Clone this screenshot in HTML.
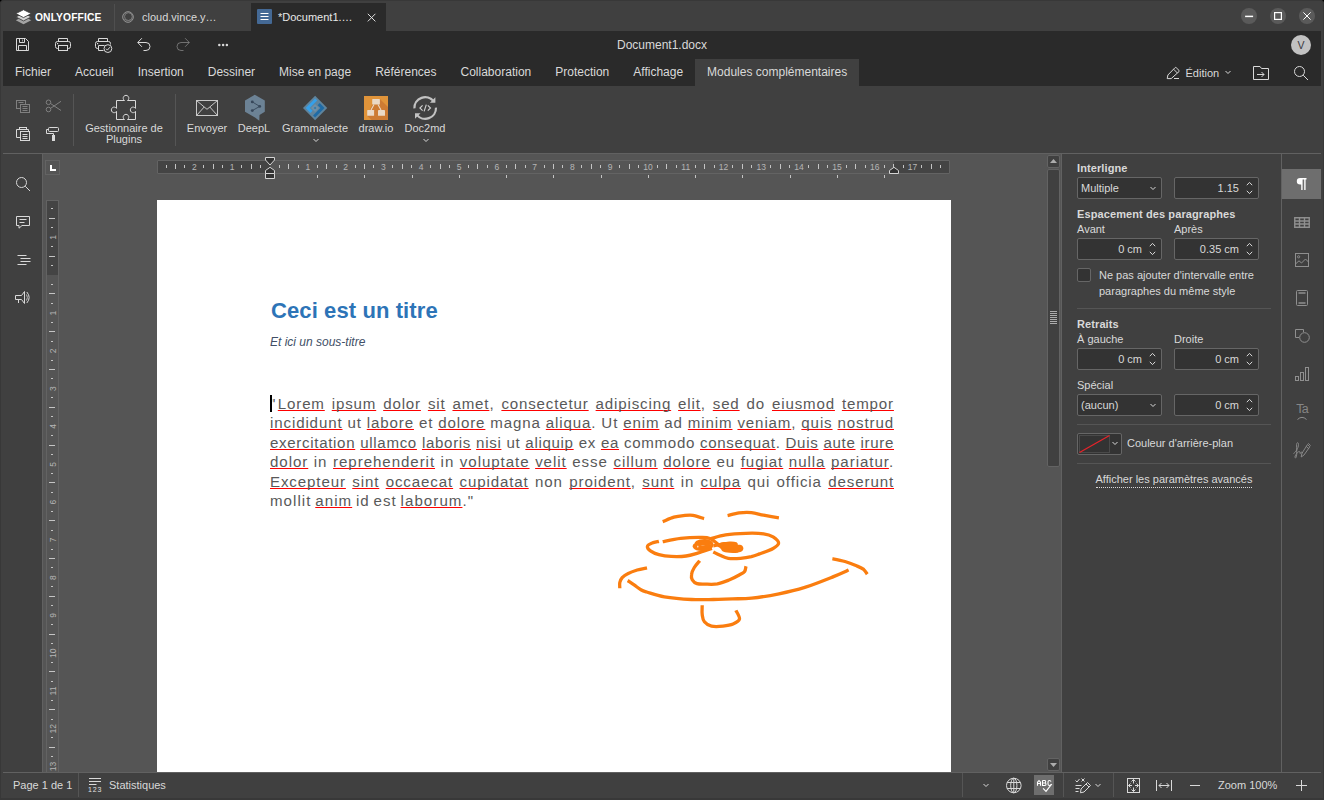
<!DOCTYPE html>
<html lang="fr">
<head>
<meta charset="utf-8">
<title>Document1.docx - ONLYOFFICE</title>
<style>
*{box-sizing:border-box;margin:0;padding:0}
html,body{width:1324px;height:800px;overflow:hidden;background:#000}
body{font-family:"Liberation Sans",sans-serif;font-size:11px;color:#d9d9d9;position:relative}
.abs{position:absolute}
#win{position:absolute;left:0;top:0;width:1324px;height:800px;background:#404040;border-radius:4px 4px 0 0;overflow:hidden}
#frame{position:absolute;left:0;top:0;width:1324px;height:800px;border:1px solid #383838;border-bottom-width:2px;border-radius:4px 4px 0 0;pointer-events:none;z-index:50}
svg{display:block;overflow:visible}
.ic{position:absolute}
.s{fill:none;stroke:#d9d9d9;stroke-width:1}
.f{fill:#d9d9d9;stroke:none}

/* title bar */
#tabsep1{left:114px;top:4px;width:1px;height:27px;background:#4f4f4f}
#tab3{left:251px;top:3px;width:135px;height:29px;background:#2a2a2a}
.ttxt{position:absolute;font-size:11px;color:#d9d9d9;white-space:nowrap;line-height:14px}
.wbtn{position:absolute;top:8px;width:16px;height:16px;border-radius:8px;background:#5a5a5a}

/* header */
#hdr{left:3px;top:31px;width:1318px;height:55px;background:#2a2a2a}
.mtab{position:absolute;top:59px;height:27px;font-size:12px;line-height:14px;padding-top:6px;color:#d9d9d9;white-space:nowrap}
#mact{left:695px;top:59px;width:164px;height:27px;background:#404040}

/* ribbon */
#ribbon{left:3px;top:86px;width:1318px;height:68px;background:#404040;border-bottom:1px solid #616161}
.vsep{position:absolute;width:1px;background:#555}
.cap{position:absolute;font-size:11px;line-height:11px;color:#d9d9d9;text-align:center;white-space:nowrap;transform:translateX(-50%)}

/* editor */
#editor{left:3px;top:154px;width:1318px;height:618px;background:#555}
#lside{left:3px;top:154px;width:40px;height:618px;background:#404040;border-right:1px solid #616161}
#page{left:157px;top:200px;width:794px;height:572px;background:#fff}
#rpanel{left:1061px;top:154px;width:221px;height:618px;background:#404040;border-left:1px solid #616161;border-right:1px solid #616161}
#rside{left:1282px;top:154px;width:39px;height:618px;background:#404040}
#ract{left:1282px;top:169px;width:39px;height:30px;background:#6e6e6e}

/* status */
#status{left:3px;top:772px;width:1318px;height:26px;background:#404040;border-top:1px solid #616161}
.stxt{position:absolute;font-size:11px;line-height:14px;color:#d9d9d9;white-space:nowrap}

/* right panel widgets */
.lbl{position:absolute;font-size:11px;line-height:14px;color:#d9d9d9;white-space:nowrap}
.lbl.b{font-weight:bold;letter-spacing:0.1px}
.box{position:absolute;width:85px;height:22px;background:#333;border:1px solid #666;border-radius:2px;font-size:11px;line-height:20px;color:#d9d9d9;white-space:nowrap}
.box .v{position:absolute;right:19px;top:0}
.box .l{position:absolute;left:3px;top:0}
.hr{position:absolute;left:1077px;width:194px;height:1px;background:#555}

/* document */
.bl{font-size:15.1px;line-height:20px;letter-spacing:0.62px;color:#595959}
.bl u{text-decoration:underline;text-decoration-color:#f00;text-decoration-thickness:1px;text-underline-offset:1px;text-decoration-skip-ink:none}
.doc{position:absolute;white-space:nowrap}
</style>
</head>
<body>
<div id="win">

<!-- ===== TITLE BAR ===== -->
<div class="abs" id="tabsep1"></div>
<div class="abs" id="tab3"></div>
<div id="titlebar-content">
<!-- logo -->
<svg class="ic" style="left:0;top:0" width="40" height="32" viewBox="0 0 40 32">
<path d="M23.5 16.4L31.3 20.2L23.5 24.2L15.8 20.2Z" fill="#a4a4a4"/>
<path d="M23.5 13.1L31.3 16.9L23.5 20.9L15.8 16.9Z" fill="#d2d2d2" stroke="#404040" stroke-width="0.9"/>
<path d="M23.5 9.7L31.3 13.6L23.5 17.6L15.8 13.6Z" fill="#ffffff" stroke="#404040" stroke-width="0.9"/>
</svg>
<div class="ttxt" style="left:35px;top:11px;font-weight:bold;font-size:10.3px;letter-spacing:0.1px;color:#fff">ONLYOFFICE</div>
<!-- tab 2 -->
<svg class="ic" style="left:122px;top:11px" width="12" height="12" viewBox="0 0 12 12">
<circle cx="6" cy="6" r="5.3" fill="none" stroke="#a0a0a0" stroke-width="0.9"/>
<circle cx="6.4" cy="5.6" r="3.9" fill="none" stroke="#8a8a8a" stroke-width="0.8"/>
<path d="M1.6 8.2Q5 11 9.8 8.8" fill="none" stroke="#7a7a7a" stroke-width="0.7"/>
</svg>
<div class="ttxt" style="left:142px;top:10px">cloud.vince.y…</div>
<!-- tab 3 -->
<svg class="ic" style="left:257px;top:9px" width="15" height="15" viewBox="0 0 15 15">
<rect x="0" y="0" width="15" height="15" rx="1" fill="#446995"/>
<path d="M3.5 4.5h8M3.5 7.5h8M3.5 10.5h8" stroke="#fff" stroke-width="1" fill="none"/>
</svg>
<div class="ttxt" style="left:278px;top:10px;color:#e8e8e8">*Document1.…</div>
<svg class="ic" style="left:367px;top:13px" width="9" height="9" viewBox="0 0 9 9"><path d="M0.8 0.8L8.4 8.4M8.4 0.8L0.8 8.4" stroke="#e0e0e0" stroke-width="1" fill="none"/></svg>
<!-- window buttons -->
<div class="wbtn" style="left:1241px"></div>
<div class="wbtn" style="left:1270px"></div>
<div class="wbtn" style="left:1299px"></div>
<svg class="ic" style="left:1241px;top:8px" width="16" height="16" viewBox="0 0 16 16"><path d="M4.1 8.4h8" stroke="#fff" stroke-width="1.5" fill="none"/></svg>
<svg class="ic" style="left:1270px;top:8px" width="16" height="16" viewBox="0 0 16 16"><rect x="4.6" y="4.6" width="6.8" height="6.8" stroke="#fff" stroke-width="1.2" fill="none"/></svg>
<svg class="ic" style="left:1299px;top:8px" width="16" height="16" viewBox="0 0 16 16"><path d="M4.4 4.4L11.6 11.6M11.6 4.4L4.4 11.6" stroke="#fff" stroke-width="1" fill="none"/></svg>
</div>

<!-- ===== HEADER ===== -->
<div class="abs" id="hdr"></div>
<div class="abs" id="mact"></div>
<div id="header-content">
<!-- save -->
<svg class="ic" style="left:15px;top:38px" width="15" height="14" viewBox="0 0 15 14">
<path class="s" d="M1.5 0.5H10.5L13.5 3.5V12.5H1.5Z"/><path class="s" d="M4.5 0.5V4.5H9.5V0.5"/><path d="M7.5 1.5V3.5" stroke="#9a9a9a"/><path class="s" d="M3.5 12.5V7.5H11.5V12.5"/>
</svg>
<!-- print -->
<svg class="ic" style="left:55px;top:38px" width="16" height="13" viewBox="0 0 16 13">
<path class="s" d="M3.5 3.5V0.5H12.5V3.5"/><path class="s" d="M3.5 10.5H2.5Q0.5 10.5 0.5 8.5V5.5Q0.5 3.5 2.5 3.5H13.5Q15.5 3.5 15.5 5.5V8.5Q15.5 10.5 13.5 10.5H12.5"/><rect class="s" x="3.5" y="7.5" width="9" height="5"/><rect x="2" y="5" width="1.2" height="1.2" fill="#d9d9d9"/>
</svg>
<!-- print preview -->
<svg class="ic" style="left:95px;top:38px" width="18" height="16" viewBox="0 0 18 16">
<path class="s" d="M3.5 3.5V0.5H12.5V3.5"/><path class="s" d="M3.5 10.5H2.5Q0.5 10.5 0.5 8.5V5.5Q0.5 3.5 2.5 3.5H13.5Q15.5 3.5 15.5 5.5V6.5"/><path class="s" d="M8.5 12.5H3.5V7.5H9.5"/><rect x="2" y="5" width="1.2" height="1.2" fill="#d9d9d9"/>
<circle class="s" cx="12.9" cy="10.6" r="3.9"/><path class="s" d="M11 10.7L12.4 12.1L14.9 9.2"/>
</svg>
<!-- undo -->
<svg class="ic" style="left:136px;top:37px" width="16" height="15" viewBox="0 0 16 15">
<path class="s" d="M5.9 1.2L1.7 5.5L5.9 9.8M2 5.5H10A4 4 0 0 1 10 13.5H7.5"/>
</svg>
<!-- redo (disabled) -->
<svg class="ic" style="left:175.5px;top:37px;opacity:.4" width="16" height="15" viewBox="0 0 16 15">
<path class="s" d="M9.1 1.2L13.3 5.5L9.1 9.8M13 5.5H5A4 4 0 0 0 5 13.5H7.5"/>
</svg>
<!-- more -->
<svg class="ic" style="left:217px;top:43px" width="12" height="4" viewBox="0 0 12 4"><circle class="f" cx="2.3" cy="2" r="1.25"/><circle class="f" cx="6.1" cy="2" r="1.25"/><circle class="f" cx="9.9" cy="2" r="1.25"/></svg>
<div class="abs" style="left:462px;top:38px;width:400px;text-align:center;font-size:12px;line-height:14px;color:#d9d9d9">Document1.docx</div>
<div class="abs" style="left:1291px;top:35px;width:20px;height:20px;border-radius:10px;background:#c2c2c2;color:#383840;font-size:10.5px;line-height:20px;text-align:center">V</div>
<!-- menu tabs -->
<div class="abs" style="left:3px;top:59px;height:27px;display:flex;font-size:12px;line-height:14px;color:#d9d9d9;white-space:nowrap">
<span style="padding:6px 12px 0">Fichier</span><span style="padding:6px 12px 0">Accueil</span><span style="padding:6px 12px 0">Insertion</span><span style="padding:6px 12px 0">Dessiner</span><span style="padding:6px 12px 0">Mise en page</span><span style="padding:6px 12px 0">Références</span><span style="padding:6px 12px 0">Collaboration</span><span style="padding:6px 12px 0">Protection</span><span style="padding:6px 12px 0">Affichage</span><span style="padding:6px 12px 0">Modules complémentaires</span>
</div>
<!-- edition -->
<svg class="ic" style="left:1165px;top:65px" width="16" height="16" viewBox="0 0 16 16">
<path class="s" d="M2.2 13.6L2.9 10L10 2.7Q10.6 2.1 11.2 2.7L14 5.4Q14.6 6 14 6.6L6.2 13.6Z" stroke-linejoin="round"/><path class="s" d="M8.6 4.2L12.4 8"/><path class="s" d="M9 13.5H14"/>
</svg>
<div class="abs" style="left:1185.5px;top:66px;font-size:11px;line-height:14px;color:#d9d9d9">Édition</div>
<svg class="ic" style="left:1224px;top:70px" width="8" height="5" viewBox="0 0 8 5"><path class="s" d="M1.5 1L4 3.5L6.5 1" stroke-width="1.3"/></svg>
<!-- open location -->
<svg class="ic" style="left:1253px;top:66px" width="16" height="14" viewBox="0 0 16 14">
<path class="s" d="M0.5 13.5V0.5H7L8.5 2.5H15.5V13.5Z"/><path class="s" d="M4 8.5H11"/><path class="s" d="M8.5 6L11 8.5L8.5 11"/>
</svg>
<!-- search -->
<svg class="ic" style="left:1293px;top:65px" width="16" height="16" viewBox="0 0 16 16"><circle class="s" cx="6.5" cy="6.5" r="5"/><path class="s" d="M10.2 10.2L15 15"/></svg>
</div>

<!-- ===== RIBBON ===== -->
<div class="abs" id="ribbon"></div>
<div id="ribbon-content">
<!-- copy (disabled) -->
<svg class="ic" style="left:15px;top:99px;opacity:.42" width="16" height="15" viewBox="0 0 16 15">
<rect class="s" x="1.5" y="1.5" width="9" height="8"/><path class="s" d="M3.5 3.5H8.5"/>
<rect x="5.5" y="5.5" width="9" height="8" fill="#404040" stroke="#d9d9d9"/><path class="s" d="M7.5 7.5H12.5M7.5 9.5H12.5M7.5 11.5H12.5"/>
</svg>
<!-- cut (disabled) -->
<svg class="ic" style="left:45px;top:99px;opacity:.42" width="17" height="14" viewBox="0 0 17 14">
<circle class="s" cx="3.5" cy="3.3" r="2.3"/><circle class="s" cx="3.5" cy="10.5" r="2.3"/><path class="s" d="M5.5 4.5L16 11.5M5.5 9.4L16 2.3"/>
</svg>
<!-- paste -->
<svg class="ic" style="left:15px;top:125px" width="16" height="17" viewBox="0 0 16 17">
<path class="s" d="M4.5 4.5H1.5V12.5H5.5"/><path class="s" d="M11.5 4.5H13.5V6.5"/><rect class="s" x="4.5" y="2.5" width="7" height="2"/>
<rect class="s" x="5.5" y="6.5" width="9" height="9"/><path class="s" d="M7.5 9.5H12.5M7.5 11.5H12.5M7.5 13.5H12.5"/>
</svg>
<!-- format painter -->
<svg class="ic" style="left:46px;top:126px" width="14" height="16" viewBox="0 0 14 16">
<rect class="s" x="2.5" y="1.5" width="10" height="4" rx="1"/><path class="s" d="M2.5 3.5H0.5V7.5H7.5V9.5"/><rect x="6.5" y="9.5" width="2" height="5" fill="#d9d9d9" stroke="#d9d9d9"/>
</svg>
<div class="vsep" style="left:73px;top:94px;height:52px"></div>
<!-- plugin manager: puzzle -->
<svg class="ic" style="left:106px;top:93px" width="32" height="28" viewBox="0 0 32 28">
<path class="s" d="M10.5 7.5H18.5A2.8 2.8 0 1 1 21.5 7.5H29.5V15.4A2.8 2.8 0 1 0 29.5 18.4V26.5H21.5A2.8 2.8 0 1 0 18.5 26.5H10.5V18.4A2.8 2.8 0 1 1 10.5 15.4Z" stroke-width="1.15"/>
</svg>
<div class="cap" style="left:124px;top:123px">Gestionnaire de</div>
<div class="cap" style="left:124px;top:134px">Plugins</div>
<div class="vsep" style="left:175px;top:94px;height:52px"></div>
<!-- envoyer -->
<svg class="ic" style="left:196px;top:100px" width="22" height="16" viewBox="0 0 22 16">
<g style="stroke:#c9c9c9"><rect class="s" style="stroke:#c9c9c9" x="0.5" y="0.5" width="21" height="15"/><path class="s" style="stroke:#c9c9c9" d="M0.5 0.5L11 9.3L21.5 0.5"/><path class="s" style="stroke:#c9c9c9" d="M0.5 15.5L8.2 7M21.5 15.5L13.8 7"/></g>
</svg>
<div class="cap" style="left:207px;top:123px">Envoyer</div>
<!-- DeepL -->
<svg class="ic" style="left:244px;top:94px" width="22" height="28" viewBox="0 0 22 28">
<path d="M10.8 0.8L20.8 6.6V17.8L15.5 20.9L15.3 26.8L11 23.5L1 17.8V6.6Z" fill="#6c8295"/>
<path d="M8.3 7.9L15.7 12.4L8.3 16.6" stroke="#37475a" stroke-width="0.9" fill="none"/>
<circle cx="8.3" cy="7.9" r="1.45" fill="#37475a"/><circle cx="15.7" cy="12.4" r="1.45" fill="#37475a"/><circle cx="8.3" cy="16.6" r="1.45" fill="#37475a"/>
</svg>
<div class="cap" style="left:254px;top:123px">DeepL</div>
<!-- Grammalecte -->
<svg class="ic" style="left:302px;top:95px" width="26" height="26" viewBox="0 0 26 26">
<g transform="translate(13.1 13) rotate(45)">
<rect x="-8.6" y="-8.6" width="17.2" height="17.2" fill="#5f849d"/>
<path d="M-6.7 -6.7H-3.8V3.8H0.2V6.7H-6.7Z" fill="#35a0ea"/>
<path d="M6.7 6.7H3.8V-3.8H-0.2V-6.7H6.7Z" fill="#1e6ba6"/>
<rect x="-2.9" y="-2.9" width="5.8" height="5.8" fill="#6f8fa6"/>
<rect x="-0.9" y="-0.9" width="1.8" height="1.8" fill="#2a78ad"/>
</g>
</svg>
<div class="cap" style="left:315px;top:123px">Grammalecte</div>
<svg class="ic" style="left:312px;top:138px" width="8" height="5" viewBox="0 0 8 5"><path class="s" d="M1.5 1L4 3.5L6.5 1" stroke-width="1.3"/></svg>
<!-- draw.io -->
<svg class="ic" style="left:364px;top:96px" width="24" height="24" viewBox="0 0 24 24">
<rect width="24" height="24" fill="#e0943a"/>
<path d="M15.9 3L24 11V24H7.5L3.2 19.8L8.2 8.5Z" fill="#cd7b33"/>
<path d="M10 8.5L7 14.1M14 8.5L17 14.1" stroke="#ead9c6" stroke-width="1.1" fill="none"/>
<rect x="8.2" y="3" width="7.7" height="5.6" rx="0.4" fill="#ead9c6"/><rect x="3.2" y="14.1" width="6.9" height="5.7" rx="0.4" fill="#ead9c6"/><rect x="14" y="14.1" width="7" height="5.7" rx="0.4" fill="#ead9c6"/>
</svg>
<div class="cap" style="left:376px;top:123px">draw.io</div>
<!-- Doc2md -->
<svg class="ic" style="left:412px;top:95px" width="26" height="26" viewBox="0 0 26 26">
<path d="M2.41 13.38A10.8 10.8 0 0 1 21.71 6.35" fill="none" stroke="#c2c2c2" stroke-width="2.2"/>
<path d="M23.99 12.62A10.8 10.8 0 0 1 4.69 19.65" fill="none" stroke="#c2c2c2" stroke-width="2.2"/>
<path d="M23.4 2.2V7.7H17.9Z" fill="#c2c2c2"/><path d="M3 23.8V18.3H8.5Z" fill="#c2c2c2"/>
<path d="M10.6 10.4L7.9 13L10.6 15.6M15.8 10.4L18.5 13L15.8 15.6M14.3 9.6L12.1 16.4" fill="none" stroke="#cfcfcf" stroke-width="1.15"/>
</svg>
<div class="cap" style="left:425px;top:123px">Doc2md</div>
<svg class="ic" style="left:422px;top:138px" width="8" height="5" viewBox="0 0 8 5"><path class="s" d="M1.5 1L4 3.5L6.5 1" stroke-width="1.3"/></svg>

</div>

<!-- ===== EDITOR ===== -->
<div class="abs" id="editor"></div>
<div class="abs" id="lside"></div>
<div id="lside-content">
<svg class="ic" style="left:15px;top:176px" width="16" height="16" viewBox="0 0 16 16"><circle class="s" cx="6.5" cy="6.5" r="5"/><path class="s" d="M10.2 10.2L15 15"/></svg>
<svg class="ic" style="left:16px;top:216px" width="14" height="13" viewBox="0 0 14 13"><path class="s" d="M0.5 0.5H13.5V9.5H6L3 12.2V9.5H0.5Z"/><path class="s" d="M3.5 3.5H10.5M3.5 6.5H8.5"/></svg>
<svg class="ic" style="left:17px;top:254px" width="14" height="12" viewBox="0 0 14 12"><path class="s" d="M0.5 1.5H9.5M3.5 4.5H13.5M3.5 7.5H13.5M0.5 10.5H9.5"/></svg>
<svg class="ic" style="left:14px;top:290px" width="18" height="15" viewBox="0 0 18 15">
<path class="s" d="M1.5 5.5H7.5L10.5 1.5V13.5L7.5 9.5H1.5Z"/><path class="s" d="M4.5 9.5V13"/>
<path d="M12.5 4.5Q14.3 7.5 12.5 10.5" fill="none" stroke="#bdbdbd"/><path class="s" d="M12.8 2Q17.5 7.5 12.8 13"/>
</svg>
</div>
<div id="rulers"><div class="abs" style="left:45px;top:160px;width:15px;height:15px;border:1px solid #636363;background:#555"></div><svg class="ic" style="left:45px;top:160px" width="15" height="15" viewBox="0 0 15 15"><path d="M6 5V10H11" stroke="#fff" stroke-width="2" fill="none"/></svg><div class="abs" style="left:157px;top:160px;width:793px;height:14px;background:#555;border:1px solid #636363;border-radius:1px"></div><div class="abs" style="left:158px;top:161px;width:112px;height:12px;background:#444"></div><div class="abs" style="left:894px;top:161px;width:55px;height:12px;background:#444"></div><svg class="ic" style="left:0;top:154px" width="1060" height="30" viewBox="0 0 1060 30"><path d="M166.5 11V14" stroke="#c4c4c4"/><path d="M175.5 10V15" stroke="#c4c4c4"/><path d="M184.5 11V14" stroke="#c4c4c4"/><text x="194.4" y="16" font-size="8.5" fill="#b6b6b6" text-anchor="middle" font-family="Liberation Sans, sans-serif">2</text><path d="M203.5 11V14" stroke="#c4c4c4"/><path d="M213.5 10V15" stroke="#c4c4c4"/><path d="M222.5 11V14" stroke="#c4c4c4"/><text x="232.2" y="16" font-size="8.5" fill="#b6b6b6" text-anchor="middle" font-family="Liberation Sans, sans-serif">1</text><path d="M241.5 11V14" stroke="#c4c4c4"/><path d="M251.5 10V15" stroke="#c4c4c4"/><path d="M260.5 11V14" stroke="#c4c4c4"/><path d="M279.5 11V14" stroke="#c4c4c4"/><path d="M288.5 10V15" stroke="#c4c4c4"/><path d="M298.5 11V14" stroke="#c4c4c4"/><text x="307.8" y="16" font-size="8.5" fill="#b6b6b6" text-anchor="middle" font-family="Liberation Sans, sans-serif">1</text><path d="M317.5 11V14" stroke="#c4c4c4"/><path d="M326.5 10V15" stroke="#c4c4c4"/><path d="M336.5 11V14" stroke="#c4c4c4"/><text x="345.6" y="16" font-size="8.5" fill="#b6b6b6" text-anchor="middle" font-family="Liberation Sans, sans-serif">2</text><path d="M355.5 11V14" stroke="#c4c4c4"/><path d="M364.5 10V15" stroke="#c4c4c4"/><path d="M373.5 11V14" stroke="#c4c4c4"/><text x="383.4" y="16" font-size="8.5" fill="#b6b6b6" text-anchor="middle" font-family="Liberation Sans, sans-serif">3</text><path d="M392.5 11V14" stroke="#c4c4c4"/><path d="M402.5 10V15" stroke="#c4c4c4"/><path d="M411.5 11V14" stroke="#c4c4c4"/><text x="421.2" y="16" font-size="8.5" fill="#b6b6b6" text-anchor="middle" font-family="Liberation Sans, sans-serif">4</text><path d="M430.5 11V14" stroke="#c4c4c4"/><path d="M440.5 10V15" stroke="#c4c4c4"/><path d="M449.5 11V14" stroke="#c4c4c4"/><text x="459.0" y="16" font-size="8.5" fill="#b6b6b6" text-anchor="middle" font-family="Liberation Sans, sans-serif">5</text><path d="M468.5 11V14" stroke="#c4c4c4"/><path d="M477.5 10V15" stroke="#c4c4c4"/><path d="M487.5 11V14" stroke="#c4c4c4"/><text x="496.8" y="16" font-size="8.5" fill="#b6b6b6" text-anchor="middle" font-family="Liberation Sans, sans-serif">6</text><path d="M506.5 11V14" stroke="#c4c4c4"/><path d="M515.5 10V15" stroke="#c4c4c4"/><path d="M525.5 11V14" stroke="#c4c4c4"/><text x="534.6" y="16" font-size="8.5" fill="#b6b6b6" text-anchor="middle" font-family="Liberation Sans, sans-serif">7</text><path d="M544.5 11V14" stroke="#c4c4c4"/><path d="M553.5 10V15" stroke="#c4c4c4"/><path d="M562.5 11V14" stroke="#c4c4c4"/><text x="572.4" y="16" font-size="8.5" fill="#b6b6b6" text-anchor="middle" font-family="Liberation Sans, sans-serif">8</text><path d="M581.5 11V14" stroke="#c4c4c4"/><path d="M591.5 10V15" stroke="#c4c4c4"/><path d="M600.5 11V14" stroke="#c4c4c4"/><text x="610.2" y="16" font-size="8.5" fill="#b6b6b6" text-anchor="middle" font-family="Liberation Sans, sans-serif">9</text><path d="M619.5 11V14" stroke="#c4c4c4"/><path d="M629.5 10V15" stroke="#c4c4c4"/><path d="M638.5 11V14" stroke="#c4c4c4"/><text x="648.0" y="16" font-size="8.5" fill="#b6b6b6" text-anchor="middle" font-family="Liberation Sans, sans-serif">10</text><path d="M657.5 11V14" stroke="#c4c4c4"/><path d="M666.5 10V15" stroke="#c4c4c4"/><path d="M676.5 11V14" stroke="#c4c4c4"/><text x="685.7" y="16" font-size="8.5" fill="#b6b6b6" text-anchor="middle" font-family="Liberation Sans, sans-serif">11</text><path d="M695.5 11V14" stroke="#c4c4c4"/><path d="M704.5 10V15" stroke="#c4c4c4"/><path d="M714.5 11V14" stroke="#c4c4c4"/><text x="723.5" y="16" font-size="8.5" fill="#b6b6b6" text-anchor="middle" font-family="Liberation Sans, sans-serif">12</text><path d="M732.5 11V14" stroke="#c4c4c4"/><path d="M742.5 10V15" stroke="#c4c4c4"/><path d="M751.5 11V14" stroke="#c4c4c4"/><text x="761.3" y="16" font-size="8.5" fill="#b6b6b6" text-anchor="middle" font-family="Liberation Sans, sans-serif">13</text><path d="M770.5 11V14" stroke="#c4c4c4"/><path d="M780.5 10V15" stroke="#c4c4c4"/><path d="M789.5 11V14" stroke="#c4c4c4"/><text x="799.1" y="16" font-size="8.5" fill="#b6b6b6" text-anchor="middle" font-family="Liberation Sans, sans-serif">14</text><path d="M808.5 11V14" stroke="#c4c4c4"/><path d="M818.5 10V15" stroke="#c4c4c4"/><path d="M827.5 11V14" stroke="#c4c4c4"/><text x="836.9" y="16" font-size="8.5" fill="#b6b6b6" text-anchor="middle" font-family="Liberation Sans, sans-serif">15</text><path d="M846.5 11V14" stroke="#c4c4c4"/><path d="M855.5 10V15" stroke="#c4c4c4"/><path d="M865.5 11V14" stroke="#c4c4c4"/><text x="874.7" y="16" font-size="8.5" fill="#b6b6b6" text-anchor="middle" font-family="Liberation Sans, sans-serif">16</text><path d="M884.5 11V14" stroke="#c4c4c4"/><path d="M893.5 10V15" stroke="#c4c4c4"/><path d="M903.5 11V14" stroke="#c4c4c4"/><text x="912.5" y="16" font-size="8.5" fill="#b6b6b6" text-anchor="middle" font-family="Liberation Sans, sans-serif">17</text><path d="M921.5 11V14" stroke="#c4c4c4"/><path d="M931.5 10V15" stroke="#c4c4c4"/><path d="M940.5 11V14" stroke="#c4c4c4"/><path d="M317.5 21V24" stroke="#c4c4c4"/><path d="M364.5 21V24" stroke="#c4c4c4"/><path d="M412.5 21V24" stroke="#c4c4c4"/><path d="M459.5 21V24" stroke="#c4c4c4"/><path d="M506.5 21V24" stroke="#c4c4c4"/><path d="M553.5 21V24" stroke="#c4c4c4"/><path d="M601.5 21V24" stroke="#c4c4c4"/><path d="M648.5 21V24" stroke="#c4c4c4"/><path d="M695.5 21V24" stroke="#c4c4c4"/><path d="M742.5 21V24" stroke="#c4c4c4"/><path d="M790.5 21V24" stroke="#c4c4c4"/><path d="M837.5 21V24" stroke="#c4c4c4"/><path d="M884.5 21V24" stroke="#c4c4c4"/><path d="M265.5 3.5H274.5V6L270 11L265.5 6Z" fill="#333" stroke="#d4d4d4" stroke-width="1" stroke-linejoin="round"/><path d="M265.5 19.5V16.5L270 13.3L274.5 16.5V19.5Z" fill="#333" stroke="#d4d4d4" stroke-width="1" stroke-linejoin="round"/><rect x="265.5" y="19.5" width="9" height="5" fill="#333" stroke="#d4d4d4" stroke-width="1" stroke-linejoin="round"/><path d="M889.5 19.5V16.5L894 13.3L898.5 16.5V19.5Z" fill="#333" stroke="#d4d4d4" stroke-width="1" stroke-linejoin="round"/></svg><div class="abs" style="left:46px;top:200px;width:13px;height:573px;background:#555;border:1px solid #636363;border-bottom:none;border-radius:1px 1px 0 0"></div><div class="abs" style="left:47px;top:201px;width:11px;height:74px;background:#444"></div><svg class="ic" style="left:40px;top:0" width="30" height="772" viewBox="0 0 30 772"><path d="M11 208.5H13" stroke="#c4c4c4"/><path d="M9 218.5H15" stroke="#c4c4c4"/><path d="M11 227.5H13" stroke="#c4c4c4"/><text transform="translate(16 237.5) rotate(-90)" font-size="8.5" fill="#b6b6b6" text-anchor="middle" font-family="Liberation Sans, sans-serif">1</text><path d="M11 246.5H13" stroke="#c4c4c4"/><path d="M9 256.5H15" stroke="#c4c4c4"/><path d="M11 265.5H13" stroke="#c4c4c4"/><path d="M11 284.5H13" stroke="#c4c4c4"/><path d="M9 293.5H15" stroke="#c4c4c4"/><path d="M11 303.5H13" stroke="#c4c4c4"/><text transform="translate(16 313.1) rotate(-90)" font-size="8.5" fill="#b6b6b6" text-anchor="middle" font-family="Liberation Sans, sans-serif">1</text><path d="M11 322.5H13" stroke="#c4c4c4"/><path d="M9 331.5H15" stroke="#c4c4c4"/><path d="M11 341.5H13" stroke="#c4c4c4"/><text transform="translate(16 350.9) rotate(-90)" font-size="8.5" fill="#b6b6b6" text-anchor="middle" font-family="Liberation Sans, sans-serif">2</text><path d="M11 360.5H13" stroke="#c4c4c4"/><path d="M9 369.5H15" stroke="#c4c4c4"/><path d="M11 378.5H13" stroke="#c4c4c4"/><text transform="translate(16 388.7) rotate(-90)" font-size="8.5" fill="#b6b6b6" text-anchor="middle" font-family="Liberation Sans, sans-serif">3</text><path d="M11 397.5H13" stroke="#c4c4c4"/><path d="M9 407.5H15" stroke="#c4c4c4"/><path d="M11 416.5H13" stroke="#c4c4c4"/><text transform="translate(16 426.5) rotate(-90)" font-size="8.5" fill="#b6b6b6" text-anchor="middle" font-family="Liberation Sans, sans-serif">4</text><path d="M11 435.5H13" stroke="#c4c4c4"/><path d="M9 445.5H15" stroke="#c4c4c4"/><path d="M11 454.5H13" stroke="#c4c4c4"/><text transform="translate(16 464.3) rotate(-90)" font-size="8.5" fill="#b6b6b6" text-anchor="middle" font-family="Liberation Sans, sans-serif">5</text><path d="M11 473.5H13" stroke="#c4c4c4"/><path d="M9 482.5H15" stroke="#c4c4c4"/><path d="M11 492.5H13" stroke="#c4c4c4"/><text transform="translate(16 502.1) rotate(-90)" font-size="8.5" fill="#b6b6b6" text-anchor="middle" font-family="Liberation Sans, sans-serif">6</text><path d="M11 511.5H13" stroke="#c4c4c4"/><path d="M9 520.5H15" stroke="#c4c4c4"/><path d="M11 530.5H13" stroke="#c4c4c4"/><text transform="translate(16 539.9) rotate(-90)" font-size="8.5" fill="#b6b6b6" text-anchor="middle" font-family="Liberation Sans, sans-serif">7</text><path d="M11 549.5H13" stroke="#c4c4c4"/><path d="M9 558.5H15" stroke="#c4c4c4"/><path d="M11 567.5H13" stroke="#c4c4c4"/><text transform="translate(16 577.7) rotate(-90)" font-size="8.5" fill="#b6b6b6" text-anchor="middle" font-family="Liberation Sans, sans-serif">8</text><path d="M11 586.5H13" stroke="#c4c4c4"/><path d="M9 596.5H15" stroke="#c4c4c4"/><path d="M11 605.5H13" stroke="#c4c4c4"/><text transform="translate(16 615.5) rotate(-90)" font-size="8.5" fill="#b6b6b6" text-anchor="middle" font-family="Liberation Sans, sans-serif">9</text><path d="M11 624.5H13" stroke="#c4c4c4"/><path d="M9 634.5H15" stroke="#c4c4c4"/><path d="M11 643.5H13" stroke="#c4c4c4"/><text transform="translate(16 653.2) rotate(-90)" font-size="8.5" fill="#b6b6b6" text-anchor="middle" font-family="Liberation Sans, sans-serif">10</text><path d="M11 662.5H13" stroke="#c4c4c4"/><path d="M9 671.5H15" stroke="#c4c4c4"/><path d="M11 681.5H13" stroke="#c4c4c4"/><text transform="translate(16 691.0) rotate(-90)" font-size="8.5" fill="#b6b6b6" text-anchor="middle" font-family="Liberation Sans, sans-serif">11</text><path d="M11 700.5H13" stroke="#c4c4c4"/><path d="M9 709.5H15" stroke="#c4c4c4"/><path d="M11 719.5H13" stroke="#c4c4c4"/><text transform="translate(16 728.8) rotate(-90)" font-size="8.5" fill="#b6b6b6" text-anchor="middle" font-family="Liberation Sans, sans-serif">12</text><path d="M11 737.5H13" stroke="#c4c4c4"/><path d="M9 747.5H15" stroke="#c4c4c4"/><path d="M11 756.5H13" stroke="#c4c4c4"/><text transform="translate(16 766.6) rotate(-90)" font-size="8.5" fill="#b6b6b6" text-anchor="middle" font-family="Liberation Sans, sans-serif">13</text></svg></div><!--/rulers-->
<div class="abs" id="page"></div>
<div id="doc-content"><div class="doc" id="dtitle" style="left:271px;top:297px;font-weight:bold;font-size:22px;line-height:28px;letter-spacing:0.1px;color:#2d74b7">Ceci est un titre</div><div class="doc" id="dsub" style="left:270px;top:335px;font-style:italic;font-size:12px;line-height:14px;color:#414f66">Et ici un sous-titre</div><div class="doc bl" style="left:270px;top:393.57px;width:624px;text-align:justify;text-align-last:justify;white-space:normal;letter-spacing:0.84px;word-spacing:-1.5px;"><span style="margin-right:1.6px">"</span><u>Lorem</u> <u>ipsum</u> <u>dolor</u> <u>sit</u> <u>amet</u>, <u>consectetur</u> <u>adipiscing</u> <u>elit</u>, <u>sed</u> do <u>eiusmod</u> <u>tempor</u></div><div class="doc bl" style="left:270px;top:413.07px;width:624px;text-align:justify;text-align-last:justify;white-space:normal;letter-spacing:0.87px;word-spacing:-1.5px;"><u>incididunt</u> ut <u>labore</u> et <u>dolore</u> magna <u>aliqua</u>. Ut <u>enim</u> ad <u>minim</u> <u>veniam</u>, <u>quis</u> <u>nostrud</u></div><div class="doc bl" style="left:270px;top:432.67px;width:624px;text-align:justify;text-align-last:justify;white-space:normal;letter-spacing:0.67px;word-spacing:-1.5px;"><u>exercitation</u> <u>ullamco</u> <u>laboris</u> <u>nisi</u> ut <u>aliquip</u> ex <u>ea</u> commodo <u>consequat</u>. <u>Duis</u> <u>aute</u> <u>irure</u></div><div class="doc bl" style="left:270px;top:452.17px;width:624px;text-align:justify;text-align-last:justify;white-space:normal;letter-spacing:0.94px;word-spacing:-1.5px;"><u>dolor</u> in <u>reprehenderit</u> in <u>voluptate</u> <u>velit</u> esse <u>cillum</u> <u>dolore</u> eu <u>fugiat</u> <u>nulla</u> <u>pariatur</u>.</div><div class="doc bl" style="left:270px;top:471.77px;width:624px;text-align:justify;text-align-last:justify;white-space:normal;letter-spacing:0.88px;word-spacing:-1.5px;"><u>Excepteur</u> <u>sint</u> <u>occaecat</u> <u>cupidatat</u> non <u>proident</u>, <u>sunt</u> in <u>culpa</u> qui officia <u>deserunt</u></div><div class="doc bl" style="left:270px;top:491.27px;width:624px;letter-spacing:1.05px;word-spacing:-1.5px;">mollit <u>anim</u> id est <u>laborum</u>."</div><div class="abs" style="left:270px;top:395px;width:2px;height:17px;background:#000"></div><svg class="ic" style="left:0;top:0" width="1324" height="800" viewBox="0 0 1324 800"><path d="M662.7 521.6C664.6 520.9 670.5 518.2 673.9 517.2C677.3 516.2 680.2 515.9 683.4 515.6C686.6 515.3 689.5 514.8 692.9 515.3C696.4 515.8 702.2 518.1 704.1 518.6" fill="none" stroke="#fa7d0f" stroke-width="3.3" stroke-linecap="butt" stroke-linejoin="round"/><path d="M727.6 515.6C729.5 515.2 735.2 513.4 739.2 512.9C743.1 512.4 747.3 512.2 751.4 512.6C755.5 513.0 759.0 514.3 763.6 515.2C768.2 516.1 776.3 517.5 778.9 517.9" fill="none" stroke="#fa7d0f" stroke-width="3.3" stroke-linecap="butt" stroke-linejoin="round"/><path d="M662.7 541.7C665.7 541.1 674.1 539.0 680.7 538.3C687.3 537.6 697.5 537.3 702.4 537.4C707.4 537.4 708.1 537.7 710.6 538.7C713.1 539.8 715.4 542.1 717.4 543.7C719.4 545.4 721.9 547.7 722.8 548.5" fill="none" stroke="#fa7d0f" stroke-width="3.3" stroke-linecap="butt" stroke-linejoin="round"/><path d="M658.9 541.4C657.8 541.7 654.1 542.2 652.1 543.1C650.2 543.9 647.6 545.1 647.4 546.5C647.2 547.8 648.9 549.9 650.8 551.2C652.7 552.6 655.5 553.8 658.9 554.6C662.3 555.5 666.6 556.2 671.2 556.4C675.7 556.6 681.6 556.6 686.1 556.0C690.7 555.4 694.1 554.1 698.4 552.9C702.7 551.6 709.7 549.2 712.0 548.5" fill="none" stroke="#fa7d0f" stroke-width="3.3" stroke-linecap="butt" stroke-linejoin="round"/><path d="M710.6 538.7C713.1 538.1 719.7 535.8 725.6 534.9C731.4 534.0 739.6 533.5 746.0 533.3C752.3 533.1 759.1 533.2 763.6 533.8C768.2 534.4 770.6 535.4 773.1 536.9C775.6 538.5 778.6 541.1 778.6 543.1C778.6 545.0 776.3 546.7 773.1 548.5C770.0 550.3 763.2 552.6 759.5 553.9C755.9 555.3 754.6 555.9 751.4 556.7C748.2 557.4 744.4 558.0 740.5 558.3C736.7 558.6 731.7 558.8 728.3 558.3C724.9 557.8 722.6 556.4 720.1 555.3C717.6 554.2 714.5 552.5 713.3 551.9" fill="none" stroke="#fa7d0f" stroke-width="3.3" stroke-linecap="butt" stroke-linejoin="round"/><path d="M699.7 560.7C698.8 561.9 695.6 565.3 694.3 567.5C692.9 569.8 691.9 572.3 691.6 574.3C691.2 576.4 691.3 578.2 692.3 579.8C693.2 581.3 694.9 582.9 697.0 583.6C699.2 584.3 701.8 584.1 705.2 584.1C708.6 584.2 713.3 584.6 717.4 583.9C721.5 583.1 726.0 581.2 729.6 579.8C733.3 578.3 736.7 576.4 739.2 575.0C741.6 573.7 743.5 573.1 744.6 571.6C745.7 570.1 745.7 567.1 746.0 566.2" fill="none" stroke="#fa7d0f" stroke-width="3.3" stroke-linecap="butt" stroke-linejoin="round"/><path d="M647.0 567.8C645.3 568.2 640.4 569.0 637.2 570.0C634.0 571.0 630.2 572.4 627.7 573.7C625.2 574.9 623.5 576.3 622.2 577.7C620.9 579.2 620.2 580.7 619.8 582.5C619.4 584.2 619.8 587.3 619.8 588.2" fill="none" stroke="#fa7d0f" stroke-width="3.3" stroke-linecap="butt" stroke-linejoin="round"/><path d="M627.7 580.5C628.8 581.2 632.2 583.6 634.5 585.2C636.7 586.8 639.2 588.8 641.3 590.0C643.3 591.1 642.9 590.9 646.7 592.0C650.6 593.1 656.9 595.5 664.4 596.8C671.9 598.0 683.4 599.0 691.6 599.5C699.7 599.9 706.5 599.6 713.3 599.5C720.1 599.4 726.0 599.0 732.4 598.8C738.8 598.6 743.9 599.0 751.7 598.1C759.5 597.3 770.1 595.6 779.0 593.8C787.8 592.0 795.7 590.2 804.8 587.4C813.9 584.5 826.2 579.5 833.5 576.6C840.8 573.7 846.1 571.2 848.6 570.1" fill="none" stroke="#fa7d0f" stroke-width="3.3" stroke-linecap="butt" stroke-linejoin="round"/><path d="M832.4 558.7C834.5 559.1 841.0 560.3 845.0 561.5C849.0 562.7 853.4 564.5 856.5 565.8C859.6 567.1 861.9 568.0 863.7 569.4C865.4 570.8 866.6 573.4 867.2 574.2" fill="none" stroke="#fa7d0f" stroke-width="3.3" stroke-linecap="butt" stroke-linejoin="round"/><path d="M702.2 605.3C702.2 606.9 701.8 611.9 702.2 614.6C702.6 617.4 702.8 619.9 704.4 621.8C705.9 623.7 708.4 625.4 711.5 626.1C714.6 626.8 719.4 626.5 723.0 626.1C726.6 625.7 730.3 625.2 733.1 624.0C735.8 622.8 739.0 621.2 739.5 618.9C740.0 616.7 736.5 611.8 735.9 610.3" fill="none" stroke="#fa7d0f" stroke-width="3.3" stroke-linecap="butt" stroke-linejoin="round"/><path d="M717.4 545.8C718.5 545.4 721.7 544.0 724.2 543.7C726.7 543.5 730.3 543.9 732.4 544.4C734.4 545.0 736.4 546.4 736.4 547.1C736.4 547.9 734.2 548.9 732.4 549.2C730.5 549.5 727.1 549.2 725.6 548.8C724.0 548.3 722.4 547.0 722.8 546.5C723.3 545.9 726.2 545.6 728.3 545.5C730.3 545.4 733.3 545.3 735.1 545.8C736.9 546.2 739.2 547.5 739.2 548.2C739.2 549.0 736.9 549.9 735.1 550.1C733.3 550.4 729.4 549.9 728.3 549.9" fill="none" stroke="#fa7d0f" stroke-width="3.3" stroke-linecap="butt" stroke-linejoin="round"/><path d="M698.4 545.1C699.3 544.8 702.0 543.1 703.8 543.1C705.6 543.1 709.0 544.3 709.2 545.1C709.5 545.9 706.9 547.4 705.2 547.8C703.5 548.2 700.1 547.5 699.0 547.4" fill="none" stroke="#fa7d0f" stroke-width="3.3" stroke-linecap="butt" stroke-linejoin="round"/><path d="M695.6 547.1C695.9 546.4 695.4 543.5 697.0 542.4C698.6 541.3 702.8 540.5 705.2 540.6C707.5 540.7 710.4 542.0 711.3 543.1C712.2 544.2 711.8 546.1 710.6 547.1C709.4 548.2 706.1 548.9 703.8 549.2C701.5 549.5 698.6 549.3 697.0 548.8C695.4 548.2 693.8 546.6 694.3 545.8C694.7 544.9 697.5 544.0 699.7 543.7C702.0 543.5 707.0 543.9 707.9 544.4C708.8 545.0 706.8 546.7 705.2 547.1C703.6 547.6 699.5 546.9 698.4 546.9" fill="none" stroke="#fa7d0f" stroke-width="3.3" stroke-linecap="butt" stroke-linejoin="round"/><path d="M713.3 545.8C714.7 545.6 718.8 544.9 721.5 544.4C724.2 544.0 727.3 543.2 729.6 543.1C732.0 543.0 734.6 543.2 735.8 543.7C736.9 544.3 735.6 546.0 736.4 546.5C737.2 546.9 739.7 546.0 740.5 546.5C741.4 546.9 742.1 548.4 741.6 549.2C741.1 549.9 739.8 550.6 737.8 551.0C735.8 551.3 732.0 551.4 729.6 551.2C727.3 551.0 724.4 550.5 723.5 549.9C722.6 549.2 722.7 547.7 724.2 547.1C725.7 546.6 730.1 546.2 732.4 546.5C734.6 546.7 736.9 548.2 737.8 548.5" fill="none" stroke="#fa7d0f" stroke-width="3.3" stroke-linecap="butt" stroke-linejoin="round"/></svg></div><!--/doc-->
<div id="scroll-content">
<div class="abs" style="left:1047px;top:155px;width:13px;height:13px;background:#404040;border:1px solid #636363;border-radius:2px"></div>
<svg class="ic" style="left:1050px;top:159px" width="7" height="4" viewBox="0 0 7 4"><path d="M0 4L3.5 0L7 4Z" fill="#adadad"/></svg>
<div class="abs" style="left:1047px;top:169px;width:13px;height:298px;background:#404040;border:1px solid #636363;border-radius:2px"></div>
<svg class="ic" style="left:1050px;top:311px" width="7" height="14" viewBox="0 0 7 14"><path d="M0 0.5H7M0 2.5H7M0 4.5H7M0 6.5H7M0 8.5H7M0 10.5H7M0 12.5H7" stroke="#adadad" stroke-width="1"/></svg>
<div class="abs" style="left:1047px;top:758px;width:13px;height:13px;background:#404040;border:1px solid #636363;border-radius:2px"></div>
<svg class="ic" style="left:1050px;top:763px" width="7" height="4" viewBox="0 0 7 4"><path d="M0 0L3.5 4L7 0Z" fill="#adadad"/></svg>
</div>
<div class="abs" id="rpanel"></div>
<div id="rpanel-content"><div class="lbl b" style="left:1077px;top:161px">Interligne</div><div class="box" style="left:1077px;top:177px"><span class="l">Multiple</span><svg class="ic" style="right:4px;top:8px" width="8" height="5" viewBox="0 0 8 5"><path class="s" d="M1.5 1L4 3.5L6.5 1" stroke-width="1.3"/></svg></div><div class="box" style="left:1174px;top:177px"><span class="v">1.15</span><svg class="ic" style="right:5px;top:3px" width="7" height="14" viewBox="0 0 7 14"><path class="s" d="M0.8 4.2L3.5 1.4L6.2 4.2M0.8 9.8L3.5 12.6L6.2 9.8" stroke-width="1.2"/></svg></div><div class="lbl b" style="left:1077px;top:207px">Espacement des paragraphes</div><div class="lbl" style="left:1077px;top:222px">Avant</div><div class="lbl" style="left:1174px;top:222px">Après</div><div class="box" style="left:1077px;top:238px"><span class="v">0 cm</span><svg class="ic" style="right:5px;top:3px" width="7" height="14" viewBox="0 0 7 14"><path class="s" d="M0.8 4.2L3.5 1.4L6.2 4.2M0.8 9.8L3.5 12.6L6.2 9.8" stroke-width="1.2"/></svg></div><div class="box" style="left:1174px;top:238px"><span class="v">0.35 cm</span><svg class="ic" style="right:5px;top:3px" width="7" height="14" viewBox="0 0 7 14"><path class="s" d="M0.8 4.2L3.5 1.4L6.2 4.2M0.8 9.8L3.5 12.6L6.2 9.8" stroke-width="1.2"/></svg></div><div class="abs" style="left:1077px;top:268px;width:14px;height:14px;background:#333;border:1px solid #666;border-radius:2px"></div><div class="lbl" style="left:1099px;top:267px;line-height:16px;white-space:normal;width:170px">Ne pas ajouter d'intervalle entre paragraphes du même style</div><div class="hr" style="top:308px"></div><div class="lbl b" style="left:1077px;top:317px">Retraits</div><div class="lbl" style="left:1077px;top:332px">À gauche</div><div class="lbl" style="left:1174px;top:332px">Droite</div><div class="box" style="left:1077px;top:348px"><span class="v">0 cm</span><svg class="ic" style="right:5px;top:3px" width="7" height="14" viewBox="0 0 7 14"><path class="s" d="M0.8 4.2L3.5 1.4L6.2 4.2M0.8 9.8L3.5 12.6L6.2 9.8" stroke-width="1.2"/></svg></div><div class="box" style="left:1174px;top:348px"><span class="v">0 cm</span><svg class="ic" style="right:5px;top:3px" width="7" height="14" viewBox="0 0 7 14"><path class="s" d="M0.8 4.2L3.5 1.4L6.2 4.2M0.8 9.8L3.5 12.6L6.2 9.8" stroke-width="1.2"/></svg></div><div class="lbl" style="left:1077px;top:378px">Spécial</div><div class="box" style="left:1077px;top:394px"><span class="l">(aucun)</span><svg class="ic" style="right:4px;top:8px" width="8" height="5" viewBox="0 0 8 5"><path class="s" d="M1.5 1L4 3.5L6.5 1" stroke-width="1.3"/></svg></div><div class="box" style="left:1174px;top:394px"><span class="v">0 cm</span><svg class="ic" style="right:5px;top:3px" width="7" height="14" viewBox="0 0 7 14"><path class="s" d="M0.8 4.2L3.5 1.4L6.2 4.2M0.8 9.8L3.5 12.6L6.2 9.8" stroke-width="1.2"/></svg></div><div class="hr" style="top:424px"></div><div class="abs" style="left:1077px;top:433px;width:45px;height:22px;background:#333;border:1px solid #666;border-radius:2px"></div><svg class="ic" style="left:1079px;top:435px" width="31" height="18" viewBox="0 0 31 18"><rect x="0.5" y="0.5" width="30" height="17" fill="#333" stroke="#4a4a4a"/><path d="M0.5 17.5L30.5 0.5" stroke="#e8232a" stroke-width="1.2"/></svg><svg class="ic" style="left:1111px;top:441px" width="8" height="5" viewBox="0 0 8 5"><path class="s" d="M1.5 1L4 3.5L6.5 1" stroke-width="1.3"/></svg><div class="lbl" style="left:1127px;top:436px">Couleur d'arrière-plan</div><div class="hr" style="top:463px"></div><div class="lbl" style="left:1095.5px;top:472px;border-bottom:1px dotted #d9d9d9;line-height:15px;height:16px">Afficher les paramètres avancés</div></div>
<div class="abs" id="rside"></div>
<div class="abs" id="ract"></div>
<div id="rside-content">
<svg class="ic" style="left:1296px;top:178px" width="11" height="12" viewBox="0 0 11 12"><path d="M5 0H10.5V1.4H9.6V12H8.2V1.4H6.6V12H5.2V6.6H4.2A3.4 3.3 0 0 1 4.2 0Z" fill="#fff"/></svg>
<!-- table -->
<svg class="ic" style="left:1294px;top:217px" width="16" height="11" viewBox="0 0 16 11"><path d="M0.75 0.75H15.25V10.25H0.75ZM0.75 4H15.25M0.75 7H15.25M5.5 0.75V10.25M10.5 0.75V10.25" fill="none" stroke="#8f8f8f" stroke-width="1.4"/></svg>
<!-- image -->
<svg class="ic" style="left:1295px;top:253px" width="14" height="14" viewBox="0 0 14 14"><rect x="0.5" y="0.5" width="13" height="13" fill="none" stroke="#8f8f8f"/><circle cx="3.6" cy="3.8" r="1.1" fill="none" stroke="#8f8f8f" stroke-width="0.9"/><path d="M0.5 11L4 7.8L6.5 10L10.5 6L13.5 9" fill="none" stroke="#8f8f8f"/></svg>
<!-- header/footer -->
<svg class="ic" style="left:1296px;top:290px" width="12" height="16" viewBox="0 0 12 16"><rect x="0.5" y="0.5" width="11" height="15" rx="1" fill="none" stroke="#8f8f8f"/><path d="M2.5 3H9.5M2.5 13H9.5" stroke="#8f8f8f" stroke-width="1.6"/></svg>
<!-- shape -->
<svg class="ic" style="left:1295px;top:329px" width="15" height="14" viewBox="0 0 15 14"><path d="M4 8.5H0.5V0.5H8.5V3" fill="none" stroke="#8f8f8f"/><circle cx="9.5" cy="8.5" r="4.8" fill="none" stroke="#8f8f8f"/></svg>
<!-- chart -->
<svg class="ic" style="left:1295px;top:367px" width="14" height="14" viewBox="0 0 14 14"><rect x="0.5" y="9.5" width="3" height="4" fill="none" stroke="#8f8f8f"/><rect x="5.5" y="5.5" width="3" height="8" fill="none" stroke="#8f8f8f"/><rect x="10.5" y="0.5" width="3" height="13" fill="none" stroke="#8f8f8f"/></svg>
<!-- text art -->
<div class="abs" style="left:1293px;top:402px;width:18px;font-size:12.5px;line-height:14px;letter-spacing:-0.9px;color:#868686;text-align:center">Ta</div>
<svg class="ic" style="left:1297px;top:416px" width="10" height="4" viewBox="0 0 10 4"><path d="M0.5 3.5Q5 -0.8 9.5 3.5" fill="none" stroke="#8f8f8f"/></svg>
<!-- signature -->
<svg class="ic" style="left:1293px;top:441px" width="18" height="18" viewBox="0 0 18 18"><path d="M0.5 12.5C2.5 11.5 5.5 7 5.5 3.5C5.5 1 3.8 1.2 3.6 3.5C3.3 7 4.5 13 3 16.5C2.5 17.5 1.5 16.5 2.2 15C3 13 5.5 10 6.5 10.5C7.3 11 6.5 12.8 7.2 12.5C8 12 8.3 10.5 9 11C9.4 11.4 9 12.5 9.8 12" fill="none" stroke="#8f8f8f" stroke-width="0.9"/><path d="M14.5 3.5L16.8 5.8L11 14L8.2 16L8.8 12.5Z" fill="none" stroke="#8f8f8f" stroke-width="0.9"/><path d="M13.2 5.3L15.5 7.6M15.3 2.3L17.6 4.6" stroke="#8f8f8f" stroke-width="0.9"/></svg>
</div>

<!-- ===== STATUS BAR ===== -->
<div class="abs" id="status"></div>
<div id="status-content">
<div class="stxt" style="left:13px;top:778px">Page 1 de 1</div>
<div class="vsep" style="left:78px;top:773px;height:24px"></div>
<svg class="ic" style="left:88px;top:777px" width="14" height="16" viewBox="0 0 14 16"><path class="s" d="M1 1.5H13M1 4.5H13M1 7.5H8.5"/><text x="7.2" y="15.3" font-size="7" fill="#e0e0e0" text-anchor="middle" font-family="Liberation Sans, sans-serif" letter-spacing="0.9">123</text></svg>
<div class="stxt" style="left:109px;top:778px">Statistiques</div>
<div class="vsep" style="left:962px;top:773px;height:24px"></div>
<svg class="ic" style="left:982px;top:783px" width="8" height="5" viewBox="0 0 8 5"><path class="s" d="M1.5 1L4 3.5L6.5 1" stroke-width="1.3"/></svg>
<!-- globe -->
<svg class="ic" style="left:1005px;top:777px" width="17" height="17" viewBox="0 0 17 17"><circle class="s" cx="8.8" cy="8.5" r="7.3"/><ellipse class="s" cx="8.8" cy="8.5" rx="3.1" ry="7.3"/><path class="s" d="M8.8 1.2V15.8M2.1 5.5H15.5M2.1 11.5H15.5"/></svg>
<!-- spell check active -->
<div class="abs" style="left:1034px;top:775px;width:20px;height:20px;background:#6e6e6e"></div>
<svg class="ic" style="left:1034px;top:775px" width="20" height="20" viewBox="0 0 20 20"><path d="M3.5 10.8V7.3L5 5.5L6.5 7.3V10.8M3.5 8.5H6.5M8.5 5.5V10.5H11Q12 10.5 12 9.3Q12 8 11 8H8.5M10.8 8Q11.7 8 11.7 6.8Q11.7 5.5 10.8 5.5H8.5M17 6.7Q16.6 5.5 15.5 5.5Q14 5.5 14 7V9Q14 10.5 15.5 10.5Q16.6 10.5 17 9.3" fill="none" stroke="#fff" stroke-width="1.1"/><path d="M9.1 13.4L12 16.3L17.8 9" fill="none" stroke="#fff" stroke-width="1.2"/></svg>
<div class="vsep" style="left:1063px;top:773px;height:24px"></div>
<!-- track changes -->
<svg class="ic" style="left:1075px;top:777px" width="17" height="17" viewBox="0 0 17 17"><path class="s" d="M0.5 3.5L2 5L4.5 2M6.5 1.5L9.5 4.5M9.5 1.5L6.5 4.5M0.5 8.5H6.5M0.5 11.5H4.5M0.5 14.5H3.5"/><path class="s" d="M12.5 5.5L15.5 8.5L9 15L5.5 15.8L6 12Z"/><path class="s" d="M11 7L14 10"/></svg>
<svg class="ic" style="left:1094px;top:783px" width="8" height="5" viewBox="0 0 8 5"><path class="s" d="M1.5 1L4 3.5L6.5 1" stroke-width="1.3"/></svg>
<div class="vsep" style="left:1113px;top:773px;height:24px"></div>
<!-- fit page -->
<svg class="ic" style="left:1127px;top:778px" width="13" height="15" viewBox="0 0 13 15"><rect class="s" x="0.5" y="0.5" width="12" height="14"/><path class="s" d="M6.5 1.5V5.5M4.5 3.5L6.5 1.5L8.5 3.5M6.5 13.5V9.5M4.5 11.5L6.5 13.5L8.5 11.5M1.5 7.5H5M3.5 5.5L1.5 7.5L3.5 9.5M11.5 7.5H8M9.5 5.5L11.5 7.5L9.5 9.5" stroke-width="0.9"/></svg>
<!-- fit width -->
<svg class="ic" style="left:1156px;top:780px" width="16" height="11" viewBox="0 0 16 11"><path class="s" d="M0.5 0V11M15.5 0V11M3 5.5H13M5.5 3L3 5.5L5.5 8M10.5 3L13 5.5L10.5 8"/></svg>
<!-- minus -->
<svg class="ic" style="left:1190px;top:785px" width="10" height="1" viewBox="0 0 10 1"><path d="M0 0.5H10" stroke="#d9d9d9"/></svg>
<div class="stxt" style="left:1218px;top:778px">Zoom 100%</div>
<svg class="ic" style="left:1296px;top:780px" width="11" height="11" viewBox="0 0 11 11"><path d="M0 5.5H11M5.5 0V11" stroke="#d9d9d9" fill="none"/></svg>
</div>

</div>
<div id="frame"></div>
</body>
</html>
